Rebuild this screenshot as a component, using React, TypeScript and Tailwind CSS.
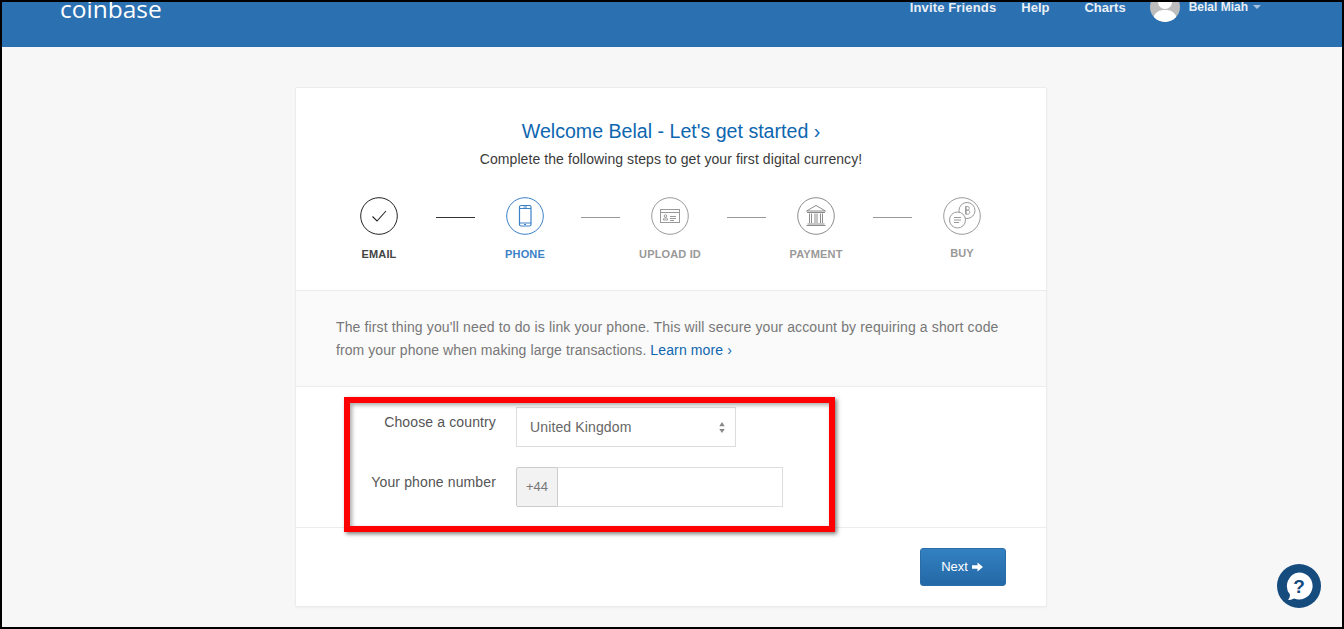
const sans = "font-['Liberation_Sans',Arial,sans-serif]"

function CheckIcon() {
  return (
    <svg viewBox="0 0 38 38" className="w-[38px] h-[38px]" fill="none" stroke="#222" strokeWidth="1">
      <circle cx="19" cy="19" r="18.3" />
      <path d="M12.5 19.5l4.5 4.5 9-10" strokeWidth="1.1" />
    </svg>
  )
}

function PhoneIcon() {
  return (
    <svg viewBox="0 0 38 38" className="w-[38px] h-[38px]" fill="none" stroke="#3c82c6" strokeWidth="1">
      <circle cx="19" cy="19" r="18.3" />
      <rect x="13.5" y="8.5" width="11.5" height="20.5" rx="1.5" strokeWidth="1.2" />
      <path d="M13.5 11.5h11.5M13.5 26h11.5M17.5 10h3.5M18 27.5h2" />
    </svg>
  )
}

function IdIcon() {
  return (
    <svg viewBox="0 0 38 38" className="w-[38px] h-[38px]" fill="none" stroke="#9a9a9a" strokeWidth="1">
      <circle cx="19" cy="19" r="18.3" />
      <rect x="9.5" y="12.5" width="19" height="13" />
      <path d="M9.5 15.5h19" />
      <circle cx="14.5" cy="19" r="1.3" />
      <path d="M12.5 23v-1c0-.6.8-1 2-1s2 .4 2 1v1zM19 19.5h6M19 21.5h6M19 23.5h4" />
    </svg>
  )
}

function BankIcon() {
  return (
    <svg viewBox="0 0 38 38" className="w-[38px] h-[38px]" fill="none" stroke="#8c8c8c" strokeWidth="1">
      <circle cx="19" cy="19" r="18.3" />
      <path d="M19 8.5l9.5 5.5h-19z" />
      <path d="M10 15.5h18M10.5 27h17M9.5 28.5h19" />
      <path d="M12.5 16.5v9.5M14.5 16.5v9.5M18 16.5v9.5M20 16.5v9.5M23.5 16.5v9.5M25.5 16.5v9.5" />
    </svg>
  )
}

function CoinsIcon() {
  return (
    <svg viewBox="0 0 38 38" className="w-[38px] h-[38px]" fill="none" stroke="#9a9a9a" strokeWidth="1">
      <circle cx="19" cy="19" r="18.3" />
      <circle cx="24" cy="13.5" r="8" fill="white" />
      <circle cx="14.5" cy="23" r="8" fill="white" />
      <path d="M22.5 9.5h2.300c2 0 2 3.700 0 3.700h-2.300h2.600c2.200 0 2.200 4 0 4h-2.600zM23.200 9.500v7.700" strokeWidth="0.9" />
      <path d="M11 20.500h7M11 23h7M11 25.500h5" />
    </svg>
  )
}

const steps = [
  { label: 'EMAIL', icon: <CheckIcon />, width: 'w-[146px]', color: 'text-[#444] mt-[12px]', line: 'left-[78px] bg-[#333]' },
  { label: 'PHONE', icon: <PhoneIcon />, width: 'w-[145px]', color: 'text-[#3c82c6] mt-[12px]', line: 'left-[77px] bg-[#999]' },
  { label: 'UPLOAD ID', icon: <IdIcon />, width: 'w-[146px]', color: 'text-[#999] mt-[12px]', line: 'left-[78px] bg-[#999]' },
  { label: 'PAYMENT', icon: <BankIcon />, width: 'w-[146px]', color: 'text-[#999] mt-[12px]', line: 'left-[78px] bg-[#999]' },
  { label: 'BUY', icon: <CoinsIcon />, width: 'w-[146px]', color: 'text-[#999] mt-[11px]', line: '' },
]

export default function App() {
  return (
    <div className={`${sans} relative h-[629px] w-[1344px] overflow-hidden border-2 border-black bg-[#f7f7f7] text-sm`}>
      {/* Header */}
      <header className="flex h-[45px] items-start overflow-hidden bg-[#2b70b1] text-white">
        <div className="-mt-[11px] ml-[58px] font-['Open_Sans',sans-serif] text-[24.5px] leading-[36px]">coinbase</div>
        <nav className="ml-auto flex items-start text-[13px] font-bold text-[#e9eff6]">
          <a className="mt-[-2px] leading-[16px] tracking-[0.15px]">Invite Friends</a>
          <a className="ml-[25px] mt-[-2px] leading-[16px]">Help</a>
          <a className="ml-[35px] mt-[-2px] leading-[16px]">Charts</a>
          <div className="relative ml-[24px] mt-[-10px] h-[30px] w-[30px] overflow-hidden rounded-full bg-[#bdbdbd]">
            <div className="mx-auto mt-[3px] h-[14px] w-[14px] rounded-full bg-white" />
            <div className="mx-auto mt-[1px] h-[14px] w-[24px] rounded-t-[10px] bg-white" />
          </div>
          <span className="ml-[9px] mt-[-3px] text-xs leading-[16px]">Belal Miah</span>
          <span className="ml-[5px] mr-[81px] mt-[3px] h-0 w-0 border-x-[4px] border-t-[4px] border-x-transparent border-t-[#a9c3de]" />
        </nav>
      </header>

      {/* Card */}
      <main className="ml-[293px] mt-[40px] w-[752px] rounded-[2px] border border-[#ececec] bg-white shadow-[0_1px_2px_rgba(0,0,0,0.04)]">
        <section className="h-[203px] border-b border-[#ececec] pt-[31px] text-center">
          <h1 className="text-[19.6px] leading-[24px] text-[#0d66b0]">Welcome Belal - Let's get started ›</h1>
          <p className="mt-[6px] text-sm leading-[20px] tracking-[0.08px] text-[#3a3a3a]">Complete the following steps to get your first digital currency!</p>
          <div className="mt-[28px] flex justify-start pl-[62px]">
            {steps.map((s) => (
              <div key={s.label} className={`relative shrink-0 ${s.width}`}>
                <div className="flex w-[42px] flex-col items-center">
                  {s.icon}
                </div>
                <div className={`flex w-[42px] justify-center whitespace-nowrap text-[11px] font-bold leading-[14px] tracking-[0.15px] ${s.color}`}>{s.label}</div>
                {s.line && <div className={`absolute top-[20px] h-px w-[39px] ${s.line}`} />}
              </div>
            ))}
          </div>
        </section>

        <section className="h-[96px] border-b border-[#ececec] bg-[#fafafa] px-[40px] pt-[25px] text-sm leading-[23px] tracking-[0.13px] text-[#777]">
          The first thing you'll need to do is link your phone. This will secure your account by requiring a short code
          <br />
          <span className="tracking-[0.08px]">from your phone when making large transactions. </span>
          <a className="text-[#0d66b0]">Learn more ›</a>
        </section>

        <section className="h-[141px] border-b border-[#ececec] pt-[20px] text-sm tracking-[0.13px] text-[#555]">
          <div className="flex">
            <label className="w-[200px] pt-[5px] text-right leading-[20px]">Choose a country</label>
            <div className="ml-[20px] flex h-[40px] w-[220px] items-center justify-between border border-[#ddd] pl-[13px] pr-[10px] text-sm text-[#666]">
              United Kingdom
              <svg viewBox="0 0 6 12" className="h-[11px] w-[6px]" fill="#888"><path d="M3 0l3 4.500H0zM3 12L0 7.500h6z" /></svg>
            </div>
          </div>
          <div className="mt-[20px] flex">
            <label className="w-[200px] pt-[5px] text-right leading-[20px]">Your phone number</label>
            <div className="ml-[20px] flex h-[40px] w-[267px]">
              <span className="flex w-[42px] items-center justify-center rounded-l-[2px] border border-[#ccc] bg-[#f2f2f2] text-[13px] tracking-normal text-[#777]">+44</span>
              <input className="min-w-0 flex-1 border border-l-0 border-[#ddd] bg-white outline-none" />
            </div>
          </div>
        </section>

        <section className="flex h-[78px] justify-end pr-[40px] pt-[20px]">
          <button className="flex h-[38px] w-[86px] items-center justify-center gap-[4px] rounded-[3px] border border-[#2a6da8] bg-gradient-to-b from-[#3381c1] to-[#2468a6] pr-[2px] text-[13px] text-white">
            Next
            <svg viewBox="0 0 12 10" className="h-[10px] w-[11px]" fill="white"><path d="M0 3h6V0l6 5-6 5V7H0z" /></svg>
          </button>
        </section>
      </main>

      {/* Annotation drawn over the form */}
      <div className="absolute left-[342px] top-[395px] h-[135px] w-[491px] border-[6px] border-[#ff0000] shadow-[2px_2px_4px_rgba(0,0,0,0.5),inset_2px_2px_4px_rgba(0,0,0,0.35)]" />

      {/* Help bubble */}
      <div className="absolute left-[1275px] top-[562px] flex h-[44px] w-[44px] items-center justify-center rounded-full bg-[#164b7e]">
        <svg viewBox="0 0 28 28" className="h-[28px] w-[28px]">
          <path d="M14 0.500a13.500 13.500 0 1 1-5 26c-2 1-4 1.500-6 1.500 1-1 2-3 2-5.500A13.500 13.500 0 0 1 14 0.500z" fill="white" />
          <text x="14" y="20.500" textAnchor="middle" fontSize="19" fontWeight="bold" fill="#164b7e" fontFamily="Liberation Sans">?</text>
        </svg>
      </div>
    </div>
  )
}
